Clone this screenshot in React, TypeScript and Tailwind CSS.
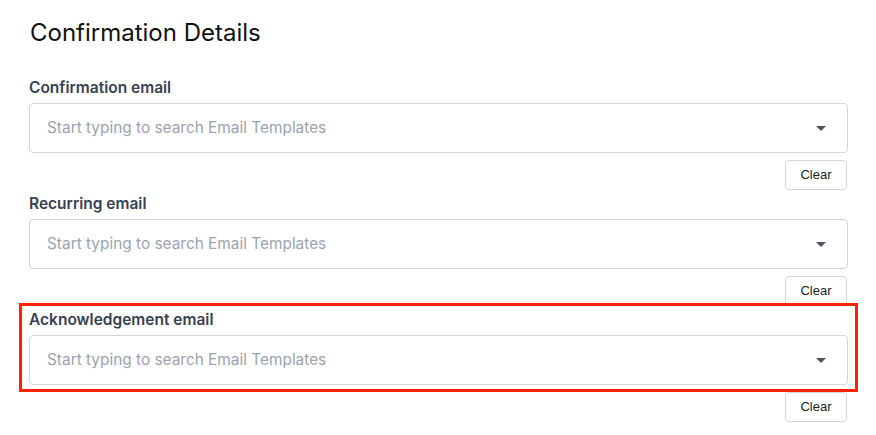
import React from 'react'

const fields = ['Confirmation email', 'Recurring email', 'Acknowledgement email']

function Caret() {
    return (
        <svg width="10" height="5" viewBox="0 0 10 5" className="shrink-0">
            <path d="M0 0h10L5 5z" fill="#4b5563" />
        </svg>
    )
}

function TemplateField({ label }: { label: string }) {
    return (
        <div className="flex flex-col">
            <label className="text-[15.5px] leading-[19px] font-semibold text-[#374151] mb-[6px]">{label}</label>
            <div className="h-[50px] border border-[#d4d4d4] rounded-[4px] bg-white flex items-center pl-[17px] pr-[21px]">
                <span className="flex-1 text-[15.4px] text-[#9ca3af]">Start typing to search Email Templates</span>
                <Caret />
            </div>
            <div className="flex justify-end mt-[7px]">
                <button className="w-[62px] h-[30px] border border-[#d4d4d4] rounded-[4px] bg-white text-[13px] text-[#222] mr-px" style={{ fontFamily: '"Liberation Sans", Arial, sans-serif' }}>
                    Clear
                </button>
            </div>
        </div>
    )
}

export default function App() {
    return (
        <div className="relative w-[876px] h-[435px] bg-white overflow-hidden" style={{ fontFamily: 'Inter, "Noto Sans", sans-serif' }}>
            <div className="pl-[29px] pr-[28px] pt-[18px]">
                <h2 className="text-[24px] leading-[30px] text-[#111] mb-[30px] pl-px">Confirmation Details</h2>
                <div className="flex flex-col gap-[4px]">
                    {fields.map((f) => (
                        <TemplateField key={f} label={f} />
                    ))}
                </div>
            </div>
            {/* highlight annotation */}
            <div className="absolute left-[19px] top-[303px] w-[839px] h-[89px] border-[3px] border-[#ff2200] pointer-events-none" />
        </div>
    )
}
